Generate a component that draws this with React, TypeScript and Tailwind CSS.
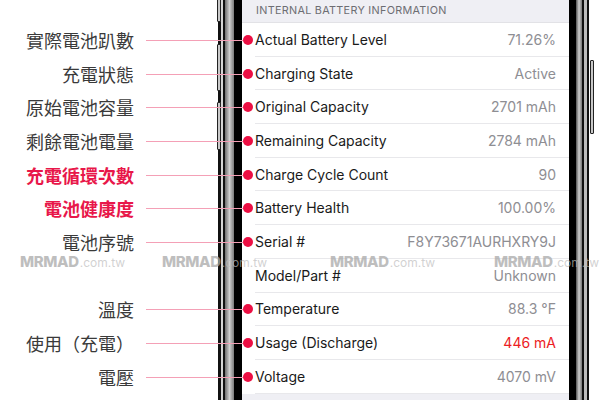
import React from "react";

interface InfoRow {
  label: string;
  note: string;
  value: string;
  noteRed?: boolean;
  valueRed?: boolean;
  marked: boolean;
}

const rows: InfoRow[] = [
  { label: "Actual Battery Level", note: "實際電池趴數", value: "71.26%", marked: true },
  { label: "Charging State", note: "充電狀態", value: "Active", marked: true },
  { label: "Original Capacity", note: "原始電池容量", value: "2701 mAh", marked: true },
  { label: "Remaining Capacity", note: "剩餘電池電量", value: "2784 mAh", marked: true },
  { label: "Charge Cycle Count", note: "充電循環次數", value: "90", noteRed: true, marked: true },
  { label: "Battery Health", note: "電池健康度", value: "100.00%", noteRed: true, marked: true },
  { label: "Serial #", note: "電池序號", value: "F8Y73671AURHXRY9J", marked: true },
  { label: "Model/Part #", note: "", value: "Unknown", marked: false },
  { label: "Temperature", note: "溫度", value: "88.3 °F", marked: true },
  { label: "Usage (Discharge)", note: "使用（充電）", value: "446 mA", valueRed: true, marked: true },
  { label: "Voltage", note: "電壓", value: "4070 mV", marked: true },
];

const Watermark: React.FC<{ left: string }> = ({ left }) => (
  <div className={`absolute top-[251px] ${left} flex items-baseline pointer-events-none`}>
    <span className="text-[15px] font-extrabold text-[#a9a9a9]/75 tracking-tight">MRMAD</span>
    <span className="text-[12px] text-[#bdbdbd]/70 ml-[1px]">.com.tw</span>
  </div>
);

const App: React.FC = () => {
  return (
    <div className="w-[600px] h-[400px] bg-white flex relative overflow-hidden font-['Inter',sans-serif]">
      {/* notes on the left */}
      <div className="w-[218px] flex flex-col pt-[23px] font-['Noto_Sans_CJK_TC',sans-serif]">
        {rows.map((row) => (
          <div key={row.label} className="h-[33.7px] flex items-center">
            <div
              className={
                "w-[134px] text-right text-[18px] leading-none " +
                (row.noteRed ? "font-bold text-[#e8174a]" : "text-[#3a3a3a]")
              }
            >
              {row.note}
            </div>
          </div>
        ))}
      </div>

      {/* left frame */}
      <div className="w-[24px] flex relative">
        <div className="absolute left-[-1px] top-[-6px] w-[4px] h-[28px] bg-[#c9c9c9] border border-[#222] rounded-[1px]" />
        <div className="absolute left-[-1px] top-[44px] w-[4px] h-[47px] bg-[#c9c9c9] border border-[#222] rounded-[1px]" />
        <div className="absolute left-[-1px] top-[102px] w-[4px] h-[48px] bg-[#c9c9c9] border border-[#222] rounded-[1px]" />
        <div className="w-[3px] bg-[#111]" />
        <div className="w-[2px] bg-[#d6d6d6]" />
        <div className="w-[2px] bg-[#111]" />
        <div className="w-[9px] bg-gradient-to-r from-[#6f6f6f] via-[#d0d0d0] to-[#7a7a7a]" />
        <div className="w-[8px] bg-black" />
      </div>

      {/* screen */}
      <div className="w-[327px] flex flex-col bg-white">
        <div className="h-[23px] bg-[#efeff4] border-b border-[#e2e2e6] flex items-center pl-[14px]">
          <span className="text-[10.8px] text-[#6d6d72] tracking-[0.3px]">INTERNAL BATTERY INFORMATION</span>
        </div>
        {rows.map((row) => (
          <div key={row.label} className="h-[33.7px] relative flex">
            {row.marked && (
              <>
                <div className="absolute left-[-96px] w-[100px] top-1/2 h-px bg-[#f4a0b6]" />
                <div className="absolute left-[1px] top-1/2 -translate-y-1/2 w-[10px] h-[10px] rounded-full bg-[#ec0f43]" />
              </>
            )}
            <div className="ml-[13px] flex-1 flex items-center justify-between pr-[13px] border-b border-[#e8e8eb] text-[14px]">
              <span className="text-[#1a1a1a]">{row.label}</span>
              <span className={row.valueRed ? "text-[#ec1c24]" : "text-[#8e8e93]"}>{row.value}</span>
            </div>
          </div>
        ))}
        <div className="flex-1 bg-[#efeff4]" />
      </div>

      {/* right frame */}
      <div className="flex-1 flex relative">
        <div className="w-[7px] bg-black" />
        <div className="w-[6px] bg-gradient-to-r from-[#555] via-[#cfcfcf] to-[#777]" />
        <div className="w-[2px] bg-[#111]" />
        <div className="w-[3px] bg-[#bdbdbd]" />
        <div className="w-[2px] bg-[#111]" />
        <div className="absolute left-[21px] top-[60px] w-[4px] h-[74px] bg-[#c9c9c9] border border-[#222] rounded-[1px]" />
      </div>

      <Watermark left="left-[20px]" />
      <Watermark left="left-[162px]" />
      <Watermark left="left-[330px]" />
      <Watermark left="left-[494px]" />
    </div>
  );
};

export default App;
